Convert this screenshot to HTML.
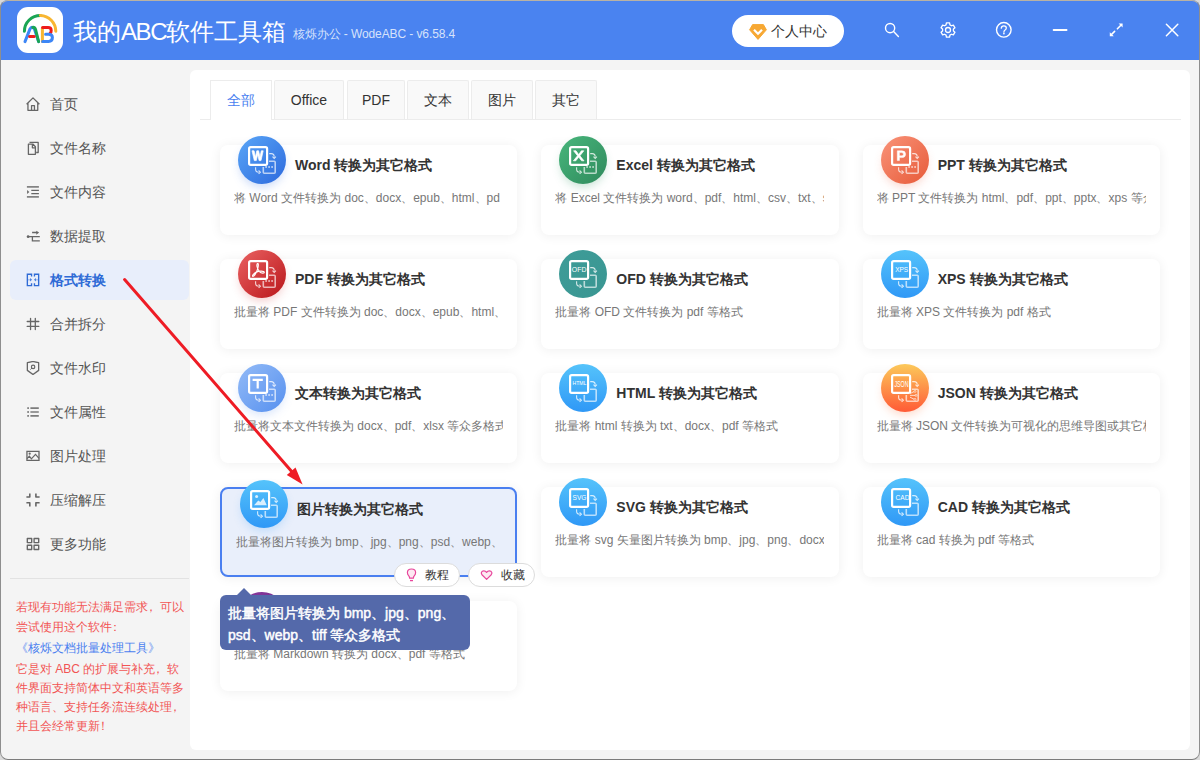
<!DOCTYPE html>
<html><head><meta charset="utf-8">
<style>
*{box-sizing:border-box;margin:0;padding:0}
html,body{width:1200px;height:760px;overflow:hidden;background:#dadada;font-family:"Liberation Sans",sans-serif}
#win{position:absolute;left:0;top:0;width:1200px;height:760px;background:#f4f4f4;border-radius:8px;overflow:hidden}
#frame{position:absolute;left:0;top:0;width:1200px;height:760px;border:1px solid #8e8e8e;border-top-color:#b9b2a4;border-bottom-color:#7c7c7c;border-radius:8px;pointer-events:none;z-index:50}
#title{position:absolute;left:0;top:0;width:1200px;height:60px;background:#4a83f0}
#logo{position:absolute;left:17px;top:7px;width:46px;height:46px;background:#fff;border-radius:11px}
#appname{position:absolute;left:73px;top:18px;font-size:24px;color:#fff;white-space:nowrap;line-height:28px}
#ver{position:absolute;left:293px;top:26px;font-size:12px;letter-spacing:-0.1px;color:#d6e2fb;white-space:nowrap;line-height:16px}
#user{position:absolute;left:732px;top:15px;width:112px;height:32px;background:#fff;border-radius:16px}
#user span{position:absolute;left:39px;top:8px;font-size:14px;line-height:16px;color:#333;white-space:nowrap}
.tb{position:absolute}
.it{position:absolute;left:10px;width:179px;height:40px;border-radius:6px;color:#666}
.it.on{background:#e8eefb;color:#2f6bd6}
.it span{position:absolute;left:40px;top:12px;font-size:14px;line-height:16px;color:#555;white-space:nowrap}
.it.on span{color:#2f6bd6;font-weight:bold}
.it svg{position:absolute;left:16px;top:13px}
#sep{position:absolute;left:10px;top:578px;width:179px;height:1px;background:#e2e2e2}
#tip{position:absolute;left:16px;top:597px;width:180px;font-size:12px;line-height:20px;color:#f25454;white-space:nowrap}
#tip .lk{color:#4a7ff0;display:block;line-height:21px;margin-top:1px}
#tip .pl{position:relative;left:-3px}
#tip .p2{line-height:19px;margin-top:1px}
#panel{position:absolute;left:190px;top:70px;width:1000px;height:680px;background:#fff;border-radius:6px}
.tab{position:absolute;top:80px;height:39px;border:1px solid #ececec;border-bottom:none;border-radius:2px 2px 0 0;background:#f9f9f9;font-size:14px;color:#333;text-align:center;line-height:38px}
.tab.on{background:#fff;color:#4a7ff0;height:40px;z-index:2;border-radius:0}
#tabline{position:absolute;left:200px;top:119px;width:981px;height:1px;background:#ececec}
.card{position:absolute;height:90px;background:#fff;border-radius:8px;box-shadow:0 1px 12px rgba(0,0,0,0.065)}
.card.on{background:#e9effb;border:2px solid #4a7ff0}
.card .ic{position:absolute;left:18px;top:-9px;width:48px;height:48px}
.card .glow{position:absolute;left:20px;top:-7px;width:44px;height:44px;border-radius:50%}
.card .t{position:absolute;left:75px;top:12px;font-size:14px;font-weight:bold;color:#333;white-space:nowrap;line-height:16px}
.card .d{position:absolute;left:14px;top:46px;width:269px;overflow:hidden;font-size:12px;color:#777;white-space:nowrap;line-height:14px}
.pill{position:absolute;top:563px;height:24px;background:#fff;border:1px solid #dcdcdc;border-radius:12px;font-size:12px;color:#333;white-space:nowrap;line-height:21px}
#tooltip{position:absolute;left:220px;top:595px;width:250px;height:55px;background:#5469aa;border-radius:6px;color:#fff;font-size:14px;font-weight:normal;-webkit-text-stroke:0.45px #fff;line-height:22px;padding:7px 0 0 8px;white-space:nowrap;z-index:10}
#tooltip:before{content:"";position:absolute;left:16.5px;top:-7px;border:7px solid transparent;border-top:none;border-bottom-color:#5469aa}
</style></head><body>
<div id="win">
  <div id="title">
    <div id="logo"></div>
    <div id="appname">我的<span style="letter-spacing:-1.4px">ABC</span>软件工具箱</div>
    <div id="ver">核烁办公 - WodeABC - v6.58.4</div>
    <div id="user"><span>个人中心</span></div>
    <svg style="position:absolute;left:0;top:0" width="1200" height="60">
      <g transform="translate(17 7)" fill="none" stroke-linecap="round" stroke-width="3">
        <path d="M7.4 24.2A16 16 0 0 1 23.4 8.4" stroke="#1aa554"/>
        <path d="M23.4 8.4A16 16 0 0 1 38.8 24.2" stroke="#f8b632"/>
        <path d="M8 34.6L13 22Q14.8 18.6 17.4 22L21.6 34.6" stroke="#3d86f6"/>
        <path d="M15.8 20.4Q17.6 20 18.6 22.6L21.6 34.6" stroke="#1aa554"/>
        <path d="M12.6 29.6H17.2" stroke="#ee1b1b"/>
        <path d="M25.4 21V34.4" stroke="#f8b632"/>
        <path d="M25.6 20.6H31Q34.2 20.6 34.2 23.4Q34.2 25.4 33.2 26.2" stroke="#ee1b1b"/>
        <path d="M25.6 34.5H31.6Q35.4 34.5 35.4 30.6Q35.4 27.2 31.6 27.2H28.6" stroke="#3d86f6"/>
      </g>
      <path d="M752.6 24.6H763.4L766.4 29.8L758 39.4L749.6 29.8Z" fill="#f7a833" stroke="#f7a833" stroke-width="1" stroke-linejoin="round"/>
      <path d="M754 29.8L758 33.8L762 29.8" fill="none" stroke="#fff" stroke-width="2.2"/>
      <g fill="none" stroke="#fff" stroke-width="1.4">
        <circle cx="890.1" cy="28.1" r="4.6"/>
        <path d="M893.6 31.6L898.4 36.4" stroke-linecap="round"/>
        <path d="M949.94 24.85L949.59 22.88L946.41 22.88L946.06 24.85L944.51 25.75L942.63 25.06L941.03 27.82L942.57 29.10L942.57 30.90L941.03 32.18L942.63 34.94L944.51 34.25L946.06 35.15L946.41 37.12L949.59 37.12L949.94 35.15L951.49 34.25L953.37 34.94L954.97 32.18L953.43 30.90L953.43 29.10L954.97 27.82L953.37 25.06L951.49 25.75Z" stroke-linejoin="round" stroke-width="1.3"/>
        <circle cx="948" cy="30" r="2.5" stroke-width="1.3"/>
        <circle cx="1003.8" cy="29.8" r="7.3" stroke-width="1.4"/>
        <path d="M1001.3 28.2Q1001.3 25.8 1003.9 25.8Q1006.3 25.8 1006.3 28Q1006.3 29.4 1004.8 30.2Q1003.9 30.8 1003.9 32.2" stroke-width="1.3" stroke-linecap="round"/>
        <path d="M1053.6 30H1066.6" stroke-width="1.8" stroke-linecap="round"/>
        <path d="M1117.4 28.8L1121.4 24.8M1114.6 31.4L1111 35" stroke-width="1.6" stroke-linecap="round"/>
        <path d="M1166.4 24.2L1177.8 35.8M1177.8 24.2L1166.4 35.8" stroke-width="1.5" stroke-linecap="round"/>
      </g>
      <circle cx="1003.9" cy="33.6" r=".85" fill="#fff"/>
      <path d="M1118.6 23.6H1122.6V27.6Z M1109.8 32.2V36.2H1113.8Z" fill="#fff"/>
    </svg>
  </div>
  <div class="it" style="top:84px"><svg width="14" height="14" viewBox="0 0 14 14"><path d="M0.6 7.2L7 0.9L13.4 7.2M1.95 6V13.3H11.75V6M5.55 13.3V8.6H8.45V13.3" fill="none" stroke="currentColor" stroke-width="1.3" stroke-linejoin="round"/></svg><span>首页</span></div>
<div class="it" style="top:128px"><svg width="14" height="14" viewBox="0 0 14 14"><path d="M3.5 1.4H12.2V11.5H10.2M2.4 3.2H7.1L9.4 5.7V13.3H2.4Z M6.4 3.6V6.8H9.4" fill="none" stroke="currentColor" stroke-width="1.3" stroke-linejoin="round"/></svg><span>文件名称</span></div>
<div class="it" style="top:172px"><svg width="14" height="14" viewBox="0 0 14 14"><path d="M0.9 1.9H12.9M0.9 11.9H12.9" fill="none" stroke="currentColor" stroke-opacity=".8" stroke-width="1.7"/><path d="M5.3 5.4H12.9M5.3 8.6H12.9" fill="none" stroke="currentColor" stroke-width="1.3"/><path d="M1.1 5L3.3 6.9L1.1 8.9Z" fill="currentColor"/></svg><span>文件内容</span></div>
<div class="it" style="top:216px"><svg width="14" height="14" viewBox="0 0 14 14"><path d="M6.1 3.5H11M2.1 7.7H13.8M6.4 7.7V11.9H13.8" fill="none" stroke="currentColor" stroke-width="1.3"/><path d="M10.3 1.7L13.1 3.5L10.3 5.7Z" fill="currentColor"/><circle cx="2.1" cy="7.7" r="1.4" fill="currentColor"/></svg><span>数据提取</span></div>
<div class="it on" style="top:260px"><svg width="14" height="14" viewBox="0 0 14 14"><path d="M5.55 3.6V1.2H1.35V12.65H5.55V10.3M8.45 3.6V1.2H12.65V12.65H8.45V10.3" fill="none" stroke="currentColor" stroke-width="1.35"/><path d="M1.6 6.85H4.6M9.4 6.85H12.4" stroke="currentColor" stroke-opacity=".45" stroke-width="1"/><path d="M4.2 5.1L5.9 6.85L4.2 8.6ZM9.8 5.1L8.1 6.85L9.8 8.6Z" fill="currentColor"/></svg><span>格式转换</span></div>
<div class="it" style="top:304px"><svg width="14" height="14" viewBox="0 0 14 14"><path d="M4.55 1.3V12.6M9.3 1.3V12.6M1.2 4.5H12.8M1.2 9.45H12.8" fill="none" stroke="currentColor" stroke-width="1.3" stroke-linecap="round"/></svg><span>合并拆分</span></div>
<div class="it" style="top:348px"><svg width="14" height="14" viewBox="0 0 14 14"><path d="M1.35 1.7Q4.2 1.2 6.9 0.4Q9.8 1.2 12.65 1.7V9.4L7 13.5L1.35 9.4Z" fill="none" stroke="currentColor" stroke-width="1.3" stroke-linejoin="round"/><circle cx="7.1" cy="5.9" r="1.7" fill="none" stroke="currentColor" stroke-width="1.2"/><path d="M5.9 7.2L4.4 8.5" stroke="currentColor" stroke-width="1"/></svg><span>文件水印</span></div>
<div class="it" style="top:392px"><svg width="14" height="14" viewBox="0 0 14 14"><path d="M4.4 3.1H12.8M4.4 7H12.8M4.4 10.9H12.8" fill="none" stroke="currentColor" stroke-opacity=".85" stroke-width="1.6"/><rect x="1.3" y="2.3" width="1.6" height="1.6" fill="currentColor"/><rect x="1.3" y="6.2" width="1.6" height="1.6" fill="currentColor"/><rect x="1.3" y="10.1" width="1.6" height="1.6" fill="currentColor"/></svg><span>文件属性</span></div>
<div class="it" style="top:436px"><svg width="14" height="14" viewBox="0 0 14 14"><path d="M0.95 2.3H13V11.45H0.95Z" fill="none" stroke="currentColor" stroke-width="1.3"/><path d="M1 9.7L3.4 7.1L5.4 9.9L9.5 5.4L13 9.4" fill="none" stroke="currentColor" stroke-width="1.2"/><circle cx="3.7" cy="4.7" r="1.1" fill="currentColor"/></svg><span>图片处理</span></div>
<div class="it" style="top:480px"><svg width="14" height="14" viewBox="0 0 14 14"><path d="M3.8 0.4V3.95H0.4M9.9 0.4V3.95H13.6M0.4 9.75H3.8V13.4M13.6 9.75H9.9V13.4" fill="none" stroke="currentColor" stroke-width="1.6" stroke-linejoin="round"/></svg><span>压缩解压</span></div>
<div class="it" style="top:524px"><svg width="14" height="14" viewBox="0 0 14 14"><path d="M1.3 1.45H5.7V5.6H1.3ZM8.1 1.45H12.7V5.6H8.1ZM1.3 8.2H5.7V12.5H1.3ZM8.1 8.2H12.7V12.5H8.1Z" fill="none" stroke="currentColor" stroke-width="1.35" stroke-linejoin="round"/></svg><span>更多功能</span></div>

  <div id="sep"></div>
  <div id="tip">若现有功能无法满足需求<span class="pl">，</span>可以<br>尝试使用这个软件<span class="pl">：</span><span class="lk">《核烁文档批量处理工具》</span><div class="p2">它是对 ABC 的扩展与补充<span class="pl">，</span>软<br>件界面支持简体中文和英语等多<br>种语言、支持任务流连续处理<span class="pl">，</span><br>并且会经常更新<span class="pl">！</span></div></div>
  <div id="panel"></div>
  <div class="tab on" style="left:210px;width:62px">全部</div>
  <div class="tab" style="left:274px;width:70px">Office</div>
  <div class="tab" style="left:347px;width:58px">PDF</div>
  <div class="tab" style="left:407px;width:62px">文本</div>
  <div class="tab" style="left:471px;width:62px">图片</div>
  <div class="tab" style="left:535px;width:62px">其它</div>
  <div id="tabline"></div>
  <div class="card" style="left:220px;top:145px;width:297.33px"><div class="glow" style="box-shadow:0 5px 10px rgba(60,120,230,.28)"></div><svg class="ic" width="48" height="48" viewBox="0 0 48 48"><defs><linearGradient id="g0" x1="0" y1="0" x2="1" y2="1"><stop offset="0" stop-color="#5aa6f7"/><stop offset="1" stop-color="#2c69dd"/></linearGradient></defs><circle cx="24" cy="24" r="24" fill="url(#g0)"/><path d="M31 25.3H36.2Q37.2 25.3 37.2 26.3V36.2Q37.2 37.2 36.2 37.2H26.3Q25.3 37.2 25.3 36.2V31" fill="none" stroke="#fff" stroke-opacity=".65" stroke-width="1.6"/><path d="M31.2 17.6H33.2Q36.2 17.6 36.2 20.8" fill="none" stroke="#fff" stroke-opacity=".78" stroke-width="1.1"/><path d="M34.5 20.6L36.2 22.4L37.9 20.6" fill="none" stroke="#fff" stroke-opacity=".78" stroke-width="1.1"/><path d="M17.6 31.2V33.2Q17.6 36.2 20.8 36.2" fill="none" stroke="#fff" stroke-opacity=".78" stroke-width="1.1"/><path d="M20.6 34.5L22.4 36.2L20.6 37.9" fill="none" stroke="#fff" stroke-opacity=".78" stroke-width="1.1"/><g fill="#fff" fill-opacity=".75"><rect x="27.3" y="30.2" width="1.6" height="1.6"/><rect x="30.3" y="30.2" width="1.6" height="1.6"/><rect x="33.3" y="30.2" width="1.6" height="1.6"/></g><rect x="11.1" y="11.1" width="18" height="17.8" rx="1.6" fill="none" stroke="#fff" stroke-width="2.2"/><path d="M14 14.8H16.1L17.4 21.2L18.8 14.8H20.6L22 21.2L23.3 14.8H25.2L23 24.6H21.1L19.7 18.3L18.3 24.6H16.3Z" fill="#fff" stroke="#fff" stroke-width=".7" stroke-linejoin="round"/></svg><div class="t">Word 转换为其它格式</div><div class="d">将 Word 文件转换为 doc、docx、epub、html、pd</div></div>
<div class="card" style="left:541.33px;top:145px;width:297.33px"><div class="glow" style="box-shadow:0 5px 10px rgba(50,150,100,.28)"></div><svg class="ic" width="48" height="48" viewBox="0 0 48 48"><defs><linearGradient id="g1" x1="0" y1="0" x2="1" y2="1"><stop offset="0" stop-color="#48b67c"/><stop offset="1" stop-color="#2f8a5c"/></linearGradient></defs><circle cx="24" cy="24" r="24" fill="url(#g1)"/><path d="M31 25.3H36.2Q37.2 25.3 37.2 26.3V36.2Q37.2 37.2 36.2 37.2H26.3Q25.3 37.2 25.3 36.2V31" fill="none" stroke="#fff" stroke-opacity=".65" stroke-width="1.6"/><path d="M31.2 17.6H33.2Q36.2 17.6 36.2 20.8" fill="none" stroke="#fff" stroke-opacity=".78" stroke-width="1.1"/><path d="M34.5 20.6L36.2 22.4L37.9 20.6" fill="none" stroke="#fff" stroke-opacity=".78" stroke-width="1.1"/><path d="M17.6 31.2V33.2Q17.6 36.2 20.8 36.2" fill="none" stroke="#fff" stroke-opacity=".78" stroke-width="1.1"/><path d="M20.6 34.5L22.4 36.2L20.6 37.9" fill="none" stroke="#fff" stroke-opacity=".78" stroke-width="1.1"/><g fill="#fff" fill-opacity=".75"><rect x="27.3" y="30.2" width="1.6" height="1.6"/><rect x="30.3" y="30.2" width="1.6" height="1.6"/><rect x="33.3" y="30.2" width="1.6" height="1.6"/></g><rect x="11.1" y="11.1" width="18" height="17.8" rx="1.6" fill="none" stroke="#fff" stroke-width="2.2"/><path d="M14.6 14.8H17L19.7 18.6L22.4 14.8H24.8L20.9 19.8L25 24.8H22.6L19.7 21.1L16.8 24.8H14.4L18.5 19.8Z" fill="#fff" stroke="#fff" stroke-width=".7" stroke-linejoin="round"/></svg><div class="t">Excel 转换为其它格式</div><div class="d">将 Excel 文件转换为 word、pdf、html、csv、txt、svg 等格式</div></div>
<div class="card" style="left:862.67px;top:145px;width:297.33px"><div class="glow" style="box-shadow:0 5px 10px rgba(240,110,80,.28)"></div><svg class="ic" width="48" height="48" viewBox="0 0 48 48"><defs><linearGradient id="g2" x1="0" y1="0" x2="1" y2="1"><stop offset="0" stop-color="#f9947a"/><stop offset="1" stop-color="#e75a38"/></linearGradient></defs><circle cx="24" cy="24" r="24" fill="url(#g2)"/><path d="M31 25.3H36.2Q37.2 25.3 37.2 26.3V36.2Q37.2 37.2 36.2 37.2H26.3Q25.3 37.2 25.3 36.2V31" fill="none" stroke="#fff" stroke-opacity=".65" stroke-width="1.6"/><path d="M31.2 17.6H33.2Q36.2 17.6 36.2 20.8" fill="none" stroke="#fff" stroke-opacity=".78" stroke-width="1.1"/><path d="M34.5 20.6L36.2 22.4L37.9 20.6" fill="none" stroke="#fff" stroke-opacity=".78" stroke-width="1.1"/><path d="M17.6 31.2V33.2Q17.6 36.2 20.8 36.2" fill="none" stroke="#fff" stroke-opacity=".78" stroke-width="1.1"/><path d="M20.6 34.5L22.4 36.2L20.6 37.9" fill="none" stroke="#fff" stroke-opacity=".78" stroke-width="1.1"/><g fill="#fff" fill-opacity=".75"><rect x="27.3" y="30.2" width="1.6" height="1.6"/><rect x="30.3" y="30.2" width="1.6" height="1.6"/><rect x="33.3" y="30.2" width="1.6" height="1.6"/></g><rect x="11.1" y="11.1" width="18" height="17.8" rx="1.6" fill="none" stroke="#fff" stroke-width="2.2"/><path d="M16.3 14.8H20.8Q24.6 14.8 24.6 18.2Q24.6 21.6 20.8 21.6H18.4V24.6H16.3ZM18.4 16.6V19.8H20.6Q22.5 19.8 22.5 18.2Q22.5 16.6 20.6 16.6Z" fill="#fff" fill-rule="evenodd" stroke="#fff" stroke-width=".5"/></svg><div class="t">PPT 转换为其它格式</div><div class="d">将 PPT 文件转换为 html、pdf、ppt、pptx、xps 等众多格式</div></div>
<div class="card" style="left:220px;top:259px;width:297.33px"><div class="glow" style="box-shadow:0 5px 10px rgba(210,50,50,.25)"></div><svg class="ic" width="48" height="48" viewBox="0 0 48 48"><defs><linearGradient id="g3" x1="0" y1="0" x2="1" y2="1"><stop offset="0" stop-color="#ea6262"/><stop offset="1" stop-color="#b9161a"/></linearGradient></defs><circle cx="24" cy="24" r="24" fill="url(#g3)"/><path d="M31 25.3H36.2Q37.2 25.3 37.2 26.3V36.2Q37.2 37.2 36.2 37.2H26.3Q25.3 37.2 25.3 36.2V31" fill="none" stroke="#fff" stroke-opacity=".65" stroke-width="1.6"/><path d="M31.2 17.6H33.2Q36.2 17.6 36.2 20.8" fill="none" stroke="#fff" stroke-opacity=".78" stroke-width="1.1"/><path d="M34.5 20.6L36.2 22.4L37.9 20.6" fill="none" stroke="#fff" stroke-opacity=".78" stroke-width="1.1"/><path d="M17.6 31.2V33.2Q17.6 36.2 20.8 36.2" fill="none" stroke="#fff" stroke-opacity=".78" stroke-width="1.1"/><path d="M20.6 34.5L22.4 36.2L20.6 37.9" fill="none" stroke="#fff" stroke-opacity=".78" stroke-width="1.1"/><g fill="#fff" fill-opacity=".75"><rect x="27.3" y="30.2" width="1.6" height="1.6"/><rect x="30.3" y="30.2" width="1.6" height="1.6"/><rect x="33.3" y="30.2" width="1.6" height="1.6"/></g><rect x="11.1" y="11.1" width="18" height="17.8" rx="1.6" fill="none" stroke="#fff" stroke-width="2.2"/><path d="M19.5 13.6Q18.6 14 19 16.4Q19.6 19.4 21.4 21.6Q23.4 23.6 25.8 23Q26.8 22.4 25.6 21.6Q24 20.8 20.4 21.4Q17 22.2 15.2 24.6Q14 26.2 14.8 26.4Q15.8 26.4 17 24.6Q18.8 22 19.8 18.4Q20.6 15.4 20.2 14Q20 13.4 19.5 13.6Z" fill="none" stroke="#fff" stroke-width="1.15" stroke-linejoin="round"/></svg><div class="t">PDF 转换为其它格式</div><div class="d">批量将 PDF 文件转换为 doc、docx、epub、html、txt 等格式</div></div>
<div class="card" style="left:541.33px;top:259px;width:297.33px"><div class="glow" style="box-shadow:0 5px 10px rgba(60,150,150,.0)"></div><svg class="ic" width="48" height="48" viewBox="0 0 48 48"><defs><linearGradient id="g4" x1="0" y1="0" x2="1" y2="1"><stop offset="0" stop-color="#3e9c98"/><stop offset="1" stop-color="#3a9692"/></linearGradient></defs><circle cx="24" cy="24" r="24" fill="url(#g4)"/><path d="M31 25.3H36.2Q37.2 25.3 37.2 26.3V36.2Q37.2 37.2 36.2 37.2H26.3Q25.3 37.2 25.3 36.2V31" fill="none" stroke="#fff" stroke-opacity=".65" stroke-width="1.6"/><path d="M31.2 17.6H33.2Q36.2 17.6 36.2 20.8" fill="none" stroke="#fff" stroke-opacity=".78" stroke-width="1.1"/><path d="M34.5 20.6L36.2 22.4L37.9 20.6" fill="none" stroke="#fff" stroke-opacity=".78" stroke-width="1.1"/><path d="M17.6 31.2V33.2Q17.6 36.2 20.8 36.2" fill="none" stroke="#fff" stroke-opacity=".78" stroke-width="1.1"/><path d="M20.6 34.5L22.4 36.2L20.6 37.9" fill="none" stroke="#fff" stroke-opacity=".78" stroke-width="1.1"/><rect x="11.1" y="11.1" width="18" height="17.8" rx="1.6" fill="none" stroke="#fff" stroke-width="2.2"/><text x="12.8" y="22" font-size="7.6" font-family="Liberation Sans" fill="#fff" textLength="14.6" lengthAdjust="spacingAndGlyphs">OFD</text></svg><div class="t">OFD 转换为其它格式</div><div class="d">批量将 OFD 文件转换为 pdf 等格式</div></div>
<div class="card" style="left:862.67px;top:259px;width:297.33px"><div class="glow" style="box-shadow:0 5px 10px rgba(60,160,250,.0)"></div><svg class="ic" width="48" height="48" viewBox="0 0 48 48"><defs><linearGradient id="g5" x1="0" y1="0" x2="0" y2="1"><stop offset="0" stop-color="#55c3fb"/><stop offset="1" stop-color="#2f98f6"/></linearGradient></defs><circle cx="24" cy="24" r="24" fill="url(#g5)"/><path d="M31 25.3H36.2Q37.2 25.3 37.2 26.3V36.2Q37.2 37.2 36.2 37.2H26.3Q25.3 37.2 25.3 36.2V31" fill="none" stroke="#fff" stroke-opacity=".65" stroke-width="1.6"/><path d="M31.2 17.6H33.2Q36.2 17.6 36.2 20.8" fill="none" stroke="#fff" stroke-opacity=".78" stroke-width="1.1"/><path d="M34.5 20.6L36.2 22.4L37.9 20.6" fill="none" stroke="#fff" stroke-opacity=".78" stroke-width="1.1"/><path d="M17.6 31.2V33.2Q17.6 36.2 20.8 36.2" fill="none" stroke="#fff" stroke-opacity=".78" stroke-width="1.1"/><path d="M20.6 34.5L22.4 36.2L20.6 37.9" fill="none" stroke="#fff" stroke-opacity=".78" stroke-width="1.1"/><rect x="11.1" y="11.1" width="18" height="17.8" rx="1.6" fill="none" stroke="#fff" stroke-width="2.2"/><text x="14.2" y="22" font-size="7.1" font-family="Liberation Sans" fill="#fff" textLength="13" lengthAdjust="spacingAndGlyphs">XPS</text></svg><div class="t">XPS 转换为其它格式</div><div class="d">批量将 XPS 文件转换为 pdf 格式</div></div>
<div class="card" style="left:220px;top:373px;width:297.33px"><div class="glow" style="box-shadow:0 5px 10px rgba(100,150,240,.25)"></div><svg class="ic" width="48" height="48" viewBox="0 0 48 48"><defs><linearGradient id="g6" x1="0" y1="0" x2="1" y2="1"><stop offset="0" stop-color="#93bbf7"/><stop offset="1" stop-color="#5690ef"/></linearGradient></defs><circle cx="24" cy="24" r="24" fill="url(#g6)"/><path d="M31 25.3H36.2Q37.2 25.3 37.2 26.3V36.2Q37.2 37.2 36.2 37.2H26.3Q25.3 37.2 25.3 36.2V31" fill="none" stroke="#fff" stroke-opacity=".65" stroke-width="1.6"/><path d="M31.2 17.6H33.2Q36.2 17.6 36.2 20.8" fill="none" stroke="#fff" stroke-opacity=".78" stroke-width="1.1"/><path d="M34.5 20.6L36.2 22.4L37.9 20.6" fill="none" stroke="#fff" stroke-opacity=".78" stroke-width="1.1"/><path d="M17.6 31.2V33.2Q17.6 36.2 20.8 36.2" fill="none" stroke="#fff" stroke-opacity=".78" stroke-width="1.1"/><path d="M20.6 34.5L22.4 36.2L20.6 37.9" fill="none" stroke="#fff" stroke-opacity=".78" stroke-width="1.1"/><g fill="#fff" fill-opacity=".75"><rect x="27.3" y="30.2" width="1.6" height="1.6"/><rect x="30.3" y="30.2" width="1.6" height="1.6"/><rect x="33.3" y="30.2" width="1.6" height="1.6"/></g><rect x="11.1" y="11.1" width="18" height="17.8" rx="1.6" fill="none" stroke="#fff" stroke-width="2.2"/><path d="M14.6 14.8H24.8V16.9H20.8V24.6H18.6V16.9H14.6Z" fill="#fff"/></svg><div class="t">文本转换为其它格式</div><div class="d">批量将文本文件转换为 docx、pdf、xlsx 等众多格式</div></div>
<div class="card" style="left:541.33px;top:373px;width:297.33px"><div class="glow" style="box-shadow:0 5px 10px rgba(60,160,250,.0)"></div><svg class="ic" width="48" height="48" viewBox="0 0 48 48"><defs><linearGradient id="g7" x1="0" y1="0" x2="0" y2="1"><stop offset="0" stop-color="#55c3fb"/><stop offset="1" stop-color="#2f98f6"/></linearGradient></defs><circle cx="24" cy="24" r="24" fill="url(#g7)"/><path d="M31 25.3H36.2Q37.2 25.3 37.2 26.3V36.2Q37.2 37.2 36.2 37.2H26.3Q25.3 37.2 25.3 36.2V31" fill="none" stroke="#fff" stroke-opacity=".65" stroke-width="1.6"/><path d="M31.2 17.6H33.2Q36.2 17.6 36.2 20.8" fill="none" stroke="#fff" stroke-opacity=".78" stroke-width="1.1"/><path d="M34.5 20.6L36.2 22.4L37.9 20.6" fill="none" stroke="#fff" stroke-opacity=".78" stroke-width="1.1"/><path d="M17.6 31.2V33.2Q17.6 36.2 20.8 36.2" fill="none" stroke="#fff" stroke-opacity=".78" stroke-width="1.1"/><path d="M20.6 34.5L22.4 36.2L20.6 37.9" fill="none" stroke="#fff" stroke-opacity=".78" stroke-width="1.1"/><rect x="11.1" y="11.1" width="18" height="17.8" rx="1.6" fill="none" stroke="#fff" stroke-width="2.2"/><text x="13.6" y="21" font-size="5.2" font-family="Liberation Sans" fill="#fff" textLength="13.8" lengthAdjust="spacingAndGlyphs">HTML</text></svg><div class="t">HTML 转换为其它格式</div><div class="d">批量将 html 转换为 txt、docx、pdf 等格式</div></div>
<div class="card" style="left:862.67px;top:373px;width:297.33px"><div class="glow" style="box-shadow:0 5px 10px rgba(255,120,60,.28)"></div><svg class="ic" width="48" height="48" viewBox="0 0 48 48"><defs><linearGradient id="g8" x1="0" y1="0" x2="0" y2="1"><stop offset="0" stop-color="#fcc95a"/><stop offset="1" stop-color="#ff5a36"/></linearGradient></defs><circle cx="24" cy="24" r="24" fill="url(#g8)"/><path d="M31 25.3H36.2Q37.2 25.3 37.2 26.3V36.2Q37.2 37.2 36.2 37.2H26.3Q25.3 37.2 25.3 36.2V31" fill="none" stroke="#fff" stroke-opacity=".65" stroke-width="1.6"/><path d="M31.2 17.6H33.2Q36.2 17.6 36.2 20.8" fill="none" stroke="#fff" stroke-opacity=".78" stroke-width="1.1"/><path d="M34.5 20.6L36.2 22.4L37.9 20.6" fill="none" stroke="#fff" stroke-opacity=".78" stroke-width="1.1"/><path d="M17.6 31.2V33.2Q17.6 36.2 20.8 36.2" fill="none" stroke="#fff" stroke-opacity=".78" stroke-width="1.1"/><path d="M20.6 34.5L22.4 36.2L20.6 37.9" fill="none" stroke="#fff" stroke-opacity=".78" stroke-width="1.1"/><rect x="11.1" y="11.1" width="18" height="17.8" rx="1.6" fill="none" stroke="#fff" stroke-width="2.2"/><text x="13.4" y="22.8" font-size="8.2" font-family="Liberation Sans Narrow,Liberation Sans" fill="#fff" textLength="14.2" lengthAdjust="spacingAndGlyphs">JSON</text><path d="M29 29.6L33 27.6M29 31.4L34.4 31.4M29 33.2L33 35.2" stroke="#fff" stroke-opacity=".7" stroke-width="1" fill="none"/><circle cx="34" cy="27.4" r="1" fill="none" stroke="#fff" stroke-opacity=".7" stroke-width=".8"/><circle cx="35" cy="31.4" r="1" fill="none" stroke="#fff" stroke-opacity=".7" stroke-width=".8"/><circle cx="34" cy="35.3" r="1" fill="none" stroke="#fff" stroke-opacity=".7" stroke-width=".8"/></svg><div class="t">JSON 转换为其它格式</div><div class="d">批量将 JSON 文件转换为可视化的思维导图或其它格式</div></div>
<div class="card on" style="left:220px;top:487px;width:297.33px"><div class="glow" style="box-shadow:0 5px 10px rgba(60,160,250,.25)"></div><svg class="ic" width="48" height="48" viewBox="0 0 48 48"><defs><linearGradient id="g9" x1="0" y1="0" x2="0" y2="1"><stop offset="0" stop-color="#55c3fb"/><stop offset="1" stop-color="#2f98f6"/></linearGradient></defs><circle cx="24" cy="24" r="24" fill="url(#g9)"/><path d="M31 25.3H36.2Q37.2 25.3 37.2 26.3V36.2Q37.2 37.2 36.2 37.2H26.3Q25.3 37.2 25.3 36.2V31" fill="none" stroke="#fff" stroke-opacity=".65" stroke-width="1.6"/><path d="M31.2 17.6H33.2Q36.2 17.6 36.2 20.8" fill="none" stroke="#fff" stroke-opacity=".78" stroke-width="1.1"/><path d="M34.5 20.6L36.2 22.4L37.9 20.6" fill="none" stroke="#fff" stroke-opacity=".78" stroke-width="1.1"/><path d="M17.6 31.2V33.2Q17.6 36.2 20.8 36.2" fill="none" stroke="#fff" stroke-opacity=".78" stroke-width="1.1"/><path d="M20.6 34.5L22.4 36.2L20.6 37.9" fill="none" stroke="#fff" stroke-opacity=".78" stroke-width="1.1"/><rect x="11.1" y="11.1" width="18" height="17.8" rx="1.6" fill="none" stroke="#fff" stroke-width="2.2"/><circle cx="16.6" cy="16.6" r="1.5" fill="#fff" fill-opacity=".8"/><path d="M14 25.2L18.3 20.4L20.4 22.1L23.4 17.9L26.8 25.2Z" fill="#fff" fill-opacity=".8"/></svg><div class="t">图片转换为其它格式</div><div class="d" style="width:266px">批量将图片转换为 bmp、jpg、png、psd、webp、tiff 等众多格式</div></div>
<div class="card" style="left:541.33px;top:487px;width:297.33px"><div class="glow" style="box-shadow:0 5px 10px rgba(60,160,250,.0)"></div><svg class="ic" width="48" height="48" viewBox="0 0 48 48"><defs><linearGradient id="g10" x1="0" y1="0" x2="0" y2="1"><stop offset="0" stop-color="#55c3fb"/><stop offset="1" stop-color="#2f98f6"/></linearGradient></defs><circle cx="24" cy="24" r="24" fill="url(#g10)"/><path d="M31 25.3H36.2Q37.2 25.3 37.2 26.3V36.2Q37.2 37.2 36.2 37.2H26.3Q25.3 37.2 25.3 36.2V31" fill="none" stroke="#fff" stroke-opacity=".65" stroke-width="1.6"/><path d="M31.2 17.6H33.2Q36.2 17.6 36.2 20.8" fill="none" stroke="#fff" stroke-opacity=".78" stroke-width="1.1"/><path d="M34.5 20.6L36.2 22.4L37.9 20.6" fill="none" stroke="#fff" stroke-opacity=".78" stroke-width="1.1"/><path d="M17.6 31.2V33.2Q17.6 36.2 20.8 36.2" fill="none" stroke="#fff" stroke-opacity=".78" stroke-width="1.1"/><path d="M20.6 34.5L22.4 36.2L20.6 37.9" fill="none" stroke="#fff" stroke-opacity=".78" stroke-width="1.1"/><rect x="11.1" y="11.1" width="18" height="17.8" rx="1.6" fill="none" stroke="#fff" stroke-width="2.2"/><text x="13.6" y="22" font-size="7.6" font-family="Liberation Sans" fill="#fff" textLength="13.8" lengthAdjust="spacingAndGlyphs">SVG</text></svg><div class="t">SVG 转换为其它格式</div><div class="d">批量将 svg 矢量图片转换为 bmp、jpg、png、docx 等格式</div></div>
<div class="card" style="left:862.67px;top:487px;width:297.33px"><div class="glow" style="box-shadow:0 5px 10px rgba(60,160,250,.0)"></div><svg class="ic" width="48" height="48" viewBox="0 0 48 48"><defs><linearGradient id="g11" x1="0" y1="0" x2="0" y2="1"><stop offset="0" stop-color="#55c3fb"/><stop offset="1" stop-color="#2f98f6"/></linearGradient></defs><circle cx="24" cy="24" r="24" fill="url(#g11)"/><path d="M31 25.3H36.2Q37.2 25.3 37.2 26.3V36.2Q37.2 37.2 36.2 37.2H26.3Q25.3 37.2 25.3 36.2V31" fill="none" stroke="#fff" stroke-opacity=".65" stroke-width="1.6"/><path d="M31.2 17.6H33.2Q36.2 17.6 36.2 20.8" fill="none" stroke="#fff" stroke-opacity=".78" stroke-width="1.1"/><path d="M34.5 20.6L36.2 22.4L37.9 20.6" fill="none" stroke="#fff" stroke-opacity=".78" stroke-width="1.1"/><path d="M17.6 31.2V33.2Q17.6 36.2 20.8 36.2" fill="none" stroke="#fff" stroke-opacity=".78" stroke-width="1.1"/><path d="M20.6 34.5L22.4 36.2L20.6 37.9" fill="none" stroke="#fff" stroke-opacity=".78" stroke-width="1.1"/><rect x="11.1" y="11.1" width="18" height="17.8" rx="1.6" fill="none" stroke="#fff" stroke-width="2.2"/><text x="14.6" y="22" font-size="7.2" font-family="Liberation Sans" fill="#fff" textLength="13.8" lengthAdjust="spacingAndGlyphs">CAD</text></svg><div class="t">CAD 转换为其它格式</div><div class="d">批量将 cad 转换为 pdf 等格式</div></div>
<div class="card" style="left:220px;top:601px;width:297.33px"><div class="glow" style="box-shadow:0 5px 10px rgba(0,0,0,0)"></div><svg class="ic" width="48" height="48" viewBox="0 0 48 48"><defs><linearGradient id="g12" x1="0" y1="0" x2="1" y2="1"><stop offset="0" stop-color="#8a3a9e"/><stop offset="1" stop-color="#6e2585"/></linearGradient></defs><circle cx="24" cy="24" r="24" fill="url(#g12)"/><path d="M31 25.3H36.2Q37.2 25.3 37.2 26.3V36.2Q37.2 37.2 36.2 37.2H26.3Q25.3 37.2 25.3 36.2V31" fill="none" stroke="#fff" stroke-opacity=".65" stroke-width="1.6"/><path d="M31.2 17.6H33.2Q36.2 17.6 36.2 20.8" fill="none" stroke="#fff" stroke-opacity=".78" stroke-width="1.1"/><path d="M34.5 20.6L36.2 22.4L37.9 20.6" fill="none" stroke="#fff" stroke-opacity=".78" stroke-width="1.1"/><path d="M17.6 31.2V33.2Q17.6 36.2 20.8 36.2" fill="none" stroke="#fff" stroke-opacity=".78" stroke-width="1.1"/><path d="M20.6 34.5L22.4 36.2L20.6 37.9" fill="none" stroke="#fff" stroke-opacity=".78" stroke-width="1.1"/><rect x="11.1" y="11.1" width="18" height="17.8" rx="1.6" fill="none" stroke="#fff" stroke-width="2.2"/></svg><div class="t">Markdown 转换为其它格式</div><div class="d">批量将 Markdown 转换为 docx、pdf 等格式</div></div>

  <div class="pill" style="left:394px;width:66px"><span style="position:absolute;left:30px;top:1px">教程</span></div>
  <div class="pill" style="left:468px;width:67px"><span style="position:absolute;left:32px;top:1px">收藏</span></div>
  <svg style="position:absolute;left:0;top:0;z-index:5" width="600" height="600"><path d="M409.6 578.2Q409.6 576.6 408.6 575.6Q407.4 574.4 407.4 572.6Q407.4 569 411.5 569Q415.6 569 415.6 572.6Q415.6 574.4 414.4 575.6Q413.4 576.6 413.4 578.2Z" fill="#fde9f2" stroke="#e8479c" stroke-width="1.2" stroke-linejoin="round"/><path d="M410 580.6H413" stroke="#e8479c" stroke-width="1.3"/><path d="M486.6 579.4L482.2 575Q481 573.6 481.4 572.4Q482 570.8 483.8 570.8Q485.6 570.8 486.6 572.4Q487.6 570.8 489.4 570.8Q491.2 570.8 491.8 572.4Q492.2 573.6 491 575Z" fill="#fde9f2" stroke="#e8479c" stroke-width="1.2" stroke-linejoin="round"/></svg>
  <div id="tooltip">批量将图片转换为 bmp、jpg、png、<br>psd、webp、tiff 等众多格式</div>
  <svg id="arrow" style="position:absolute;left:0;top:0;z-index:40" width="1200" height="760"><path d="M124.6 279.6L293 473" stroke="#ee1c25" stroke-width="3" stroke-linecap="round"/><path d="M302.6 484.6L286.8 475.1L295.5 467.6Z" fill="#ee1c25"/></svg>
</div>
<div id="frame"></div>
</body></html>
